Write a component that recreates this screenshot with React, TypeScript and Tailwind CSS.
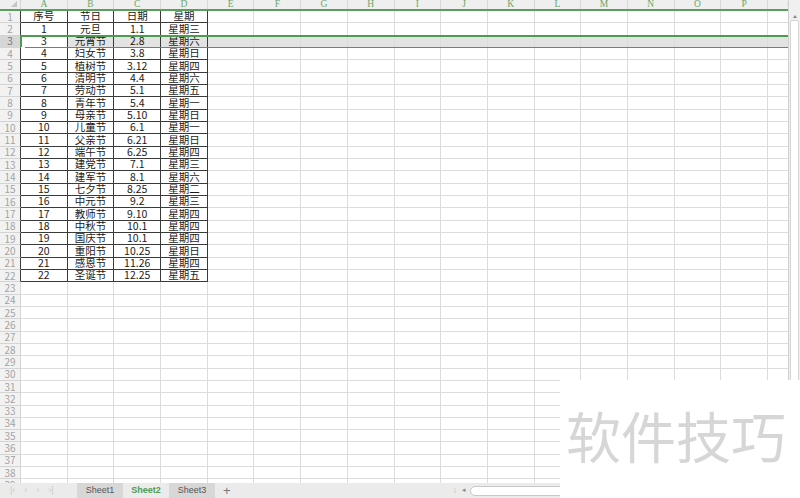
const cols = ['A', 'B', 'C', 'D', 'E', 'F', 'G', 'H', 'I', 'J', 'K', 'L', 'M', 'N', 'O', 'P', 'Q'];

const data: string[][] = [
  ['序号', '节日', '日期', '星期'],
  ['1', '元旦', '1.1', '星期三'],
  ['3', '元宵节', '2.8', '星期六'],
  ['4', '妇女节', '3.8', '星期日'],
  ['5', '植树节', '3.12', '星期四'],
  ['6', '清明节', '4.4', '星期六'],
  ['7', '劳动节', '5.1', '星期五'],
  ['8', '青年节', '5.4', '星期一'],
  ['9', '母亲节', '5.10', '星期日'],
  ['10', '儿童节', '6.1', '星期一'],
  ['11', '父亲节', '6.21', '星期日'],
  ['12', '端午节', '6.25', '星期四'],
  ['13', '建党节', '7.1', '星期三'],
  ['14', '建军节', '8.1', '星期六'],
  ['15', '七夕节', '8.25', '星期二'],
  ['16', '中元节', '9.2', '星期三'],
  ['17', '教师节', '9.10', '星期四'],
  ['18', '中秋节', '10.1', '星期四'],
  ['19', '国庆节', '10.1', '星期四'],
  ['20', '重阳节', '10.25', '星期日'],
  ['21', '感恩节', '11.26', '星期四'],
  ['22', '圣诞节', '12.25', '星期五'],
];

const rowCount = 39;

const Row = ({ n }: { n: number }) => {
  const values = data[n - 1];
  const selected = n === 3;
  return (
    <div className="relative flex h-[12.33px]">
      <div
        className={`w-[21px] shrink-0 border-r border-b flex items-center justify-center text-[10px] leading-none ${
          values ? 'border-r-[#3a3a3a] border-b-[#d4d4d4]' : 'border-[#d4d4d4]'
        } ${selected ? 'bg-[#d6d6d6] text-[#777]' : 'bg-[#f2f2f2] text-[#a3a3a3]'}`}
      >
        {n}
      </div>
      {cols.map((c, i) => {
        const inTable = !!values && i < 4;
        const active = selected && i === 0;
        return (
          <div
            key={c}
            className={`w-[46.7px] shrink-0 border-b border-r flex items-center justify-center text-[10.5px] leading-none text-[#1a1a1a] ${
              inTable ? 'border-[#3a3a3a]' : 'border-[#dcdcdc]'
            } ${selected && !active ? 'bg-[#e3e3e3]' : 'bg-white'}`}
          >
            {inTable ? values[i] : ''}
          </div>
        );
      })}
      {selected && (
        <>
          <div className="pointer-events-none absolute left-[20px] right-0 top-[-1px] bottom-[-1px] border-y-2 border-[#4e9a52]" />
          <div className="pointer-events-none absolute left-[20px] top-0 bottom-0 w-[2px] bg-[#4e9a52]" />
          <div className="pointer-events-none absolute left-[21px] bottom-[-3px] h-[4px] w-[4px] bg-[#4e9a52] border border-white" />
        </>
      )}
    </div>
  );
};

export default function App() {
  return (
    <div className="relative w-[800px] h-[498px] overflow-hidden bg-white font-['Noto_Sans_CJK_SC',sans-serif] select-none">
      <div className="flex h-[483px]">
        {/* sheet grid */}
        <div className="flex-1 overflow-hidden">
          <div className="flex h-[11px] border-b-2 border-[#5aa05d] bg-[#efefef]">
            <div className="relative w-[21px] shrink-0 border-r border-[#d4d4d4]">
              <div className="absolute right-[3px] bottom-[2px] w-0 h-0 border-l-[6px] border-l-transparent border-b-[6px] border-b-[#c4c4c4]" />
            </div>
            {cols.map((c) => (
              <div
                key={c}
                className="w-[46.7px] shrink-0 border-r border-[#d8d8d8] flex items-center justify-center text-[9.5px] leading-none text-[#6aa66c] font-['Liberation_Serif',serif]"
              >
                {c}
              </div>
            ))}
          </div>
          {Array.from({ length: rowCount }, (_, i) => (
            <Row key={i} n={i + 1} />
          ))}
        </div>
        {/* vertical scrollbar */}
        <div className="w-[12px] shrink-0 bg-[#f0f0f0] border-l border-[#d0d0d0] flex flex-col items-center">
          <div className="h-[12px]" />
          <div className="h-[8px] flex items-center justify-center">
            <div className="w-0 h-0 border-x-[2.5px] border-x-transparent border-b-[3px] border-b-[#888]" />
          </div>
          <div className="flex-1 w-[9px] bg-white border border-[#d4d4d4] rounded-[2px]" />
        </div>
      </div>

      {/* sheet tabs */}
      <div className="flex h-[15px] items-center bg-[#ebebeb] text-[9px] text-[#555] font-['Liberation_Sans',sans-serif]">
        <div className="flex w-[77px] items-center gap-[9px] pl-[10px] text-[#c8c8c8] text-[9px] leading-none">
          <span>|‹</span>
          <span>‹</span>
          <span>›</span>
          <span>›|</span>
        </div>
        <div className="h-full w-[46px] bg-[#d7d7d7] flex items-center justify-center">Sheet1</div>
        <div className="h-full w-[46px] flex items-center justify-center font-bold text-[#4e9a52]">Sheet2</div>
        <div className="h-full w-[46px] bg-[#d7d7d7] flex items-center justify-center">Sheet3</div>
        <div className="ml-[8px] text-[13px] leading-none text-[#777]">+</div>
        <div className="ml-auto flex items-center h-full">
          <span className="text-[8px] text-[#bbb] mr-[6px]">⁞</span>
          <span className="text-[7px] text-[#888] mr-[4px]">◂</span>
          <div className="w-[330px] h-[10px] bg-white border border-[#c8c8c8] rounded-[5px]" />
        </div>
      </div>

      {/* watermark */}
      <div className="absolute left-[560px] top-[380px] right-0 bottom-0 bg-white pl-[6px] pt-[27px]">
        <div className="text-[55px] leading-none text-[#d6d6d6] whitespace-nowrap">软件技巧</div>
      </div>
    </div>
  );
}
